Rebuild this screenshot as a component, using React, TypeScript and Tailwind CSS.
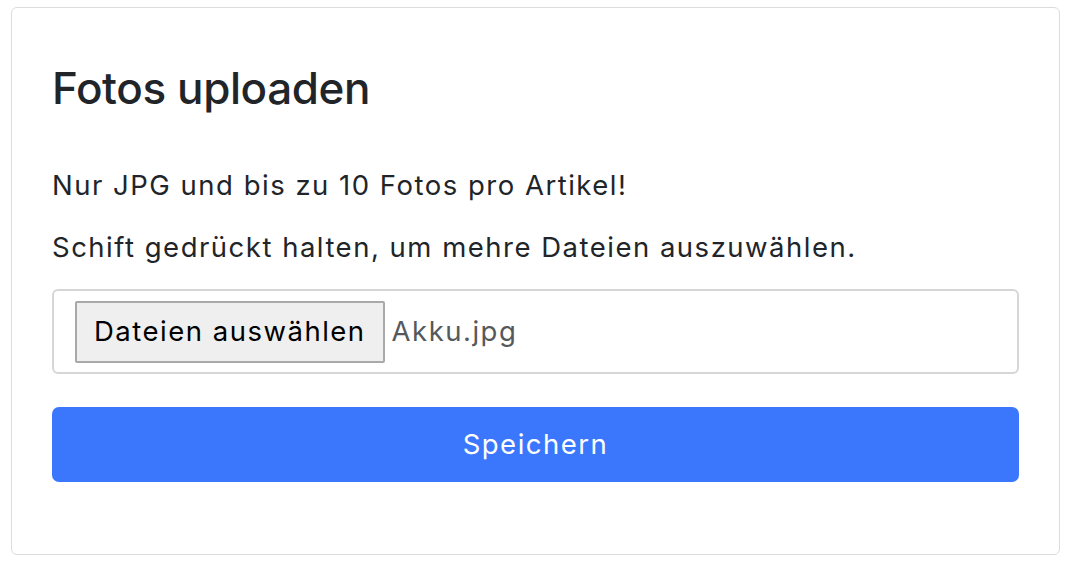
export default function App() {
  return (
    <div className="w-[1070px] h-[562px] bg-white pt-[7px] pl-[11px] font-['Inter','Liberation_Sans',sans-serif] text-[#212529]">
      <div className="w-[1049px] h-[548px] border border-[#dcdcdc] rounded-[6px] px-[40px] pt-[54px]">
        <h1 className="text-[44px] leading-[52px] font-medium tracking-[-0.4px]">Fotos uploaden</h1>
        <p className="mt-[52px] text-[27.5px] leading-[39px] tracking-[1.5px]">Nur JPG und bis zu 10 Fotos pro Artikel!</p>
        <p className="mt-[23px] text-[27.5px] leading-[39px] tracking-[1.5px]">Schift gedrückt halten, um mehre Dateien auszuwählen.</p>
        <div className="mt-[22px] h-[85px] border-2 border-[#d6d6d6] rounded-[6px] flex items-center pl-[21px] gap-[7px]">
          <button className="h-[62px] px-[17px] bg-[#efefef] border-2 border-[#a9a9a9] rounded-[2px] text-[27.5px] tracking-[1.5px] text-black">
            Dateien auswählen
          </button>
          <span className="text-[27.5px] tracking-[1.5px] text-[#55595c]">Akku.jpg</span>
        </div>
        <button className="mt-[33px] w-full h-[75px] rounded-[7px] bg-[#3a77fd] text-white text-[27.5px] tracking-[1.5px]">
          Speichern
        </button>
      </div>
    </div>
  );
}
